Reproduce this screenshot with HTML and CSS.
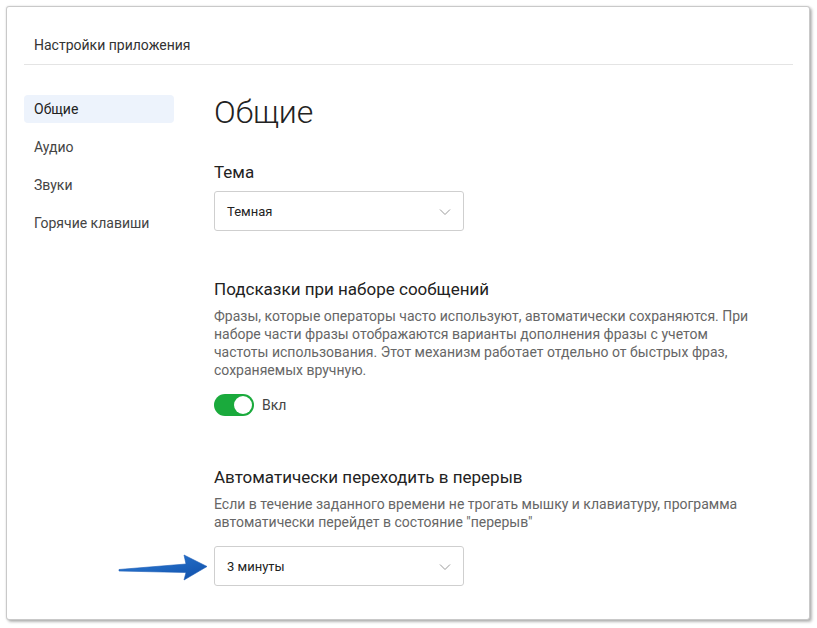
FILE: index.html
```html
<!DOCTYPE html>
<html lang="ru">
<head>
  <meta charset="UTF-8" />
  <title>Настройки приложения</title>
  <link rel="stylesheet" href="styles.css">
</head>
<body>
  <div class="window">
    <div class="window-header">Настройки приложения</div>

    <div class="window-body">
      <ul class="side-menu">
        <li class="active">Общие</li>
        <li>Аудио</li>
        <li>Звуки</li>
        <li>Горячие клавиши</li>
      </ul>

      <div class="content">
        <h1>Общие</h1>

        <div class="setting">
          <h3>Тема</h3>
          <div class="select">
            <span>Темная</span>
            <svg class="chevron" width="12" height="8" viewBox="0 0 12 8"><path d="M1 1.5 L6 6.5 L11 1.5" fill="none" stroke="#9a9a9a" stroke-width="1"/></svg>
          </div>
        </div>

        <div class="setting hints">
          <h3>Подсказки при наборе сообщений</h3>
          <p class="desc">Фразы, которые операторы часто используют, автоматически сохраняются. При наборе части фразы отображаются варианты дополнения фразы с учетом частоты использования. Этот механизм работает отдельно от быстрых фраз, сохраняемых вручную.</p>
          <div class="toggle-row">
            <span class="toggle"><span class="knob"></span></span>
            <span>Вкл</span>
          </div>
        </div>

        <div class="setting pause">
          <h3>Автоматически переходить в перерыв</h3>
          <p class="desc">Если в течение заданного времени не трогать мышку и клавиатуру, программа автоматически перейдет в состояние "перерыв"</p>
          <div class="select select-low">
            <span>3 минуты</span>
            <svg class="chevron" width="12" height="8" viewBox="0 0 12 8"><path d="M1 1.5 L6 6.5 L11 1.5" fill="none" stroke="#9a9a9a" stroke-width="1"/></svg>
            <svg class="arrow" width="92" height="30" viewBox="0 0 92 30">
              <defs>
                <linearGradient id="ag" x1="0" y1="0" x2="1" y2="1">
                  <stop offset="0" stop-color="#2f7fd8"/>
                  <stop offset="1" stop-color="#0f4ea8"/>
                </linearGradient>
              </defs>
              <path d="M1 16.5 L68 11 L66 2 L89 13.5 L66 27 L68 19.5 L1 18 Z" fill="url(#ag)" stroke="#1a5bb5" stroke-width="0.6" stroke-linejoin="round"/>
            </svg>
          </div>
        </div>
      </div>
    </div>
  </div>
</body>
</html>
```

FILE: styles.css
```css
body {
  margin: 0;
  padding: 6px;
  background: #ffffff;
  font-family: Roboto, "Noto Sans", Arial, sans-serif;
  color: #222;
}

.window {
  width: 804px;
  height: 614px;
  background: #fff;
  border: 1px solid #c9c9c9;
  border-radius: 3px;
  box-shadow: 2px 2px 3px rgba(0,0,0,0.28), 0 0 2px rgba(0,0,0,0.15);
  box-sizing: border-box;
  overflow: hidden;
}

.window-header {
  margin: 0 16px 0 17px;
  padding: 30px 10px 11px;
  font-size: 14px;
  line-height: 16px;
  color: #333;
  border-bottom: 1px solid #e4e4e4;
}

.window-body {
  display: flex;
  padding-left: 17px;
  gap: 40px;
}

.side-menu {
  list-style: none;
  margin: 30px 0 0;
  padding: 0;
  width: 150px;
  display: flex;
  flex-direction: column;
  gap: 10px;
}
.side-menu li {
  height: 28px;
  line-height: 28px;
  padding-left: 10px;
  font-size: 14px;
  color: #444;
  border-radius: 4px;
}
.side-menu li.active { background: #edf3fc; color: #222; }

.content {
  padding-top: 29px;
}
.content h1 {
  margin: 0;
  font-size: 32px;
  line-height: 36px;
  font-weight: 300;
  color: #222;
}

.setting { margin-top: 31px; }
.setting h3 {
  margin: 0;
  font-size: 17px;
  line-height: 22px;
  font-weight: 400;
  color: #222;
}
.setting.hints { margin-top: 47px; }
.setting.pause { margin-top: 50px; }

.desc {
  margin: 7px 0 0;
  max-width: 540px;
  font-size: 14px;
  line-height: 18px;
  color: #666;
}

.select {
  position: relative;
  margin-top: 8px;
  width: 250px;
  height: 40px;
  box-sizing: border-box;
  border: 1px solid #cfcfcf;
  border-radius: 3px;
  display: flex;
  align-items: center;
  justify-content: space-between;
  padding: 0 12px 0 12px;
  font-size: 13px;
  color: #222;
}
.select-low { margin-top: 15px; }
.chevron { margin-top: 1px; }

.arrow {
  position: absolute;
  left: -97px;
  top: 6px;
}

.toggle-row {
  margin-top: 15px;
  display: flex;
  align-items: center;
  gap: 8px;
  font-size: 14px;
  color: #444;
}
.toggle {
  width: 40px;
  height: 22px;
  border-radius: 11px;
  background: #1aaa3c;
  display: flex;
  align-items: center;
  justify-content: flex-end;
  padding: 0 2px;
  box-sizing: border-box;
}
.knob {
  width: 18px;
  height: 18px;
  border-radius: 50%;
  background: #fff;
}
```
